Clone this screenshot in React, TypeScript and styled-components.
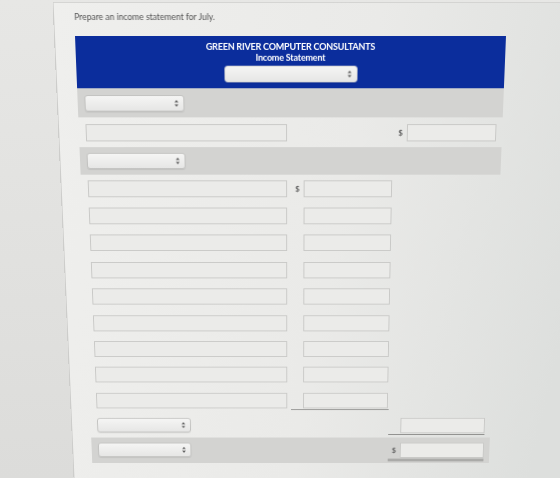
import React from 'react';
import styled, {createGlobalStyle} from 'styled-components';

const GlobalStyle = createGlobalStyle`
  html, body {
    margin: 0;
    padding: 0;
  }
  body {
    background: #dfdfdd;
    font-family: Lato, 'Liberation Sans', sans-serif;
  }
`;

const Page = styled.div`
  width: 560px;
  height: 478px;
  overflow: hidden;
  padding-top: 2px;
  box-sizing: border-box;
  background: linear-gradient(180deg, #e7e7e5 0%, #dcdcda 100%);
`;

// the worksheet is tilted slightly away from the viewer
const Card = styled.div`
  box-sizing: border-box;
  width: 560px;
  height: 540px;
  margin-left: 54px;
  padding: 9px 0 0 20px;
  background: linear-gradient(100deg, #efefed 0%, #eaeae8 50%, #dddfdd 90%);
  border-top: 1px solid #d3d3d1;
  border-left: 1px solid #cdcdcb;
  transform-origin: 237px 34px;
  transform: perspective(500px) rotateX(-5.34deg);
`;

const Prompt = styled.div`
  font-size: 8.5px;
  line-height: 10px;
  color: #545454;
`;

const Sheet = styled.div`
  width: 431px;
  margin-top: 14px;
  display: flex;
  flex-direction: column;
`;

const Header = styled.div`
  box-sizing: border-box;
  height: 53px;
  padding-top: 5px;
  background: #0b2d9c;
  display: flex;
  flex-direction: column;
  align-items: center;
  color: #fff;
  font-weight: 700;
  font-size: 9px;
`;

const HeaderLine = styled.div`
  line-height: 11px;
  letter-spacing: -0.2px;
`;

const Band = styled.div<{$h: number}>`
  box-sizing: border-box;
  height: ${p => p.$h}px;
  padding: 0 6px 0 7px;
  background: #d3d3d1;
  display: grid;
  grid-template-columns: 209px 105px 104px;
  align-items: center;
`;

const Row = styled(Band)`
  background: transparent;
`;

const SelectBox = styled.div<{$w: number}>`
  box-sizing: border-box;
  width: ${p => p.$w}px;
  height: 17px;
  padding-right: 5px;
  display: flex;
  align-items: center;
  justify-content: flex-end;
  background: linear-gradient(180deg, #f5f5f4 0%, #e6e6e5 100%);
  border: 1px solid #c3c3c1;
  border-radius: 3px;
  box-shadow: 0 1px 1px rgba(0, 0, 0, 0.08);
`;

const HeaderSelect = styled(SelectBox)`
  margin-top: 3px;
  border-color: #d8d8d8;
`;

const Field = styled.input<{$w: number}>`
  box-sizing: border-box;
  width: ${p => p.$w}px;
  height: 18px;
  margin: 0;
  padding: 0 4px;
  border: 1px solid #c9c9c7;
  border-radius: 0;
  background: #ebebe9;
  font: inherit;
  outline: none;
`;

const Cell = styled.div<{$rule?: 'single' | 'double'}>`
  display: flex;
  align-items: center;
  padding-bottom: ${p => (p.$rule ? 1 : 0)}px;
  border-bottom: ${p =>
    p.$rule === 'double' ? '3px double #8f8f8d' : p.$rule === 'single' ? '1px solid #8f8f8d' : 'none'};
  margin-top: ${p => (p.$rule === 'double' ? 4 : p.$rule ? 2 : 0)}px;
`;

const Dollar = styled.span`
  width: 13px;
  text-align: center;
  font-size: 8px;
  font-weight: 700;
  color: #626262;
`;

const Spacer = styled.div``;

function UpDown() {
  return (
    <svg width="4" height="7" viewBox="0 0 4 7">
      <path d="M2 0 L4 2.6 H0 Z M0 4.4 H4 L2 7 Z" fill="#5e5e5e" />
    </svg>
  );
}

function Select({width = 101}: {width?: number}) {
  return (
    <SelectBox $w={width}>
      <UpDown />
    </SelectBox>
  );
}

function Amount({dollar, rule}: {dollar?: boolean; rule?: 'single' | 'double'}) {
  return (
    <Cell $rule={rule}>
      <Dollar>{dollar ? '$' : ''}</Dollar>
      <Field $w={91} readOnly />
    </Cell>
  );
}

const detailRows = Array.from({length: 9}, (_, i) => i);

export default function App() {
  return (
    <Page>
      <GlobalStyle />
      <Card>
        <Prompt>Prepare an income statement for July.</Prompt>
        <Sheet>
          <Header>
            <HeaderLine>GREEN RIVER COMPUTER CONSULTANTS</HeaderLine>
            <HeaderLine>Income Statement</HeaderLine>
            <HeaderSelect $w={134}>
              <UpDown />
            </HeaderSelect>
          </Header>

          <Band $h={30}>
            <Select />
          </Band>

          <Row $h={31}>
            <Field $w={205} readOnly />
            <Spacer />
            <Amount dollar />
          </Row>

          <Band $h={29}>
            <Select />
          </Band>

          {detailRows.map(i => (
            <Row key={i} $h={29.4}>
              <Field $w={205} readOnly />
              <Amount dollar={i === 0} rule={i === detailRows.length - 1 ? 'single' : undefined} />
              <Spacer />
            </Row>
          ))}

          <Row $h={28.5}>
            <Select />
            <Spacer />
            <Amount rule="single" />
          </Row>

          <Band $h={29.5}>
            <Select />
            <Spacer />
            <Amount dollar rule="double" />
          </Band>
        </Sheet>
      </Card>
    </Page>
  );
}
